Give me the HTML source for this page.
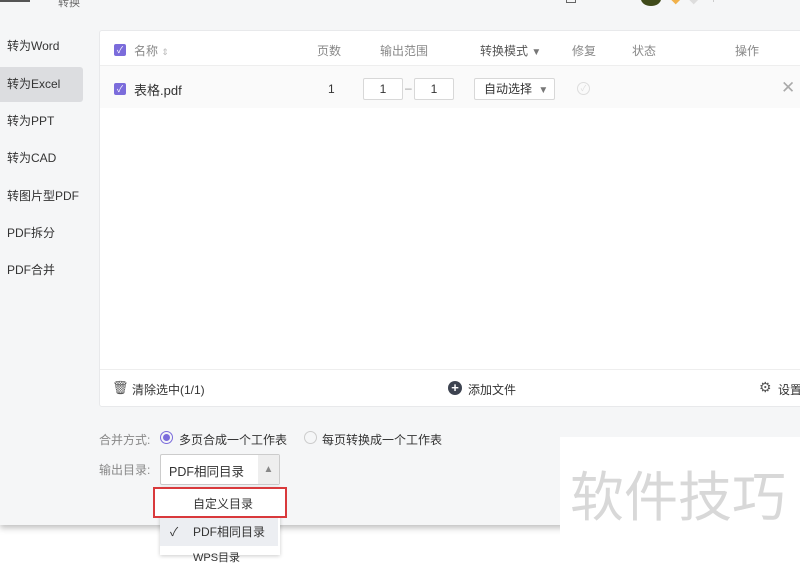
<!DOCTYPE html>
<html><head><meta charset="utf-8"><style>
*{margin:0;padding:0;box-sizing:border-box}
body{width:800px;height:555px;overflow:hidden;background:#fff;font-family:"Liberation Sans","Noto Sans CJK SC",sans-serif;font-size:12px;color:#333;position:relative}
.win{position:absolute;left:0;top:0;width:800px;height:525px;background:#f5f6f7;box-shadow:0 3px 6px rgba(0,0,0,.25)}
.a{position:absolute;white-space:nowrap}
.side{position:absolute;left:0;width:83px;height:35px;line-height:35px;padding-left:7px;font-size:12px;color:#333}
.panel{position:absolute;left:99px;top:30px;width:710px;height:377px;background:#fff;border:1px solid #e8e9eb;border-radius:3px}
.cb{position:absolute;width:12px;height:12px;background:#7b6cdb;border-radius:2px;color:#fff;font-size:9px;line-height:12px;text-align:center}
.hd{color:#888;font-size:12px}
.box{position:absolute;background:#fff;border:1px solid #d8d8d8;border-radius:2px;text-align:center;line-height:20px}
</style></head><body>
<div class="win">
<div class="a" style="left:0;top:-6px;width:30px;height:8px;border-bottom:2px solid #555"></div>
<div class="a" style="left:58px;top:-6px;color:#666;font-size:11px">转换</div>
<div class="a" style="left:566px;top:-5px;width:10px;height:8px;border:1px solid #666"></div>
<div class="a" style="left:580px;top:-6px;width:40px;height:6px;background:#888;opacity:.5"></div>
<div class="a" style="left:641px;top:-8px;width:20px;height:14px;border-radius:50%;background:#3f4a1a"></div>
<div class="a" style="left:670px;top:-6px;width:10px;height:8px;background:#f1b14a;transform:rotate(45deg)"></div>
<div class="a" style="left:688px;top:-6px;width:10px;height:8px;background:#ddd;transform:rotate(45deg)"></div>
<div class="a" style="left:713px;top:-6px;width:1px;height:8px;background:#ccc"></div>
<div class="side" style="top:29px">转为Word</div>
<div class="side" style="top:67px;background:#dcdde0;border-radius:0 3px 3px 0">转为Excel</div>
<div class="side" style="top:104px">转为PPT</div>
<div class="side" style="top:141px">转为CAD</div>
<div class="side" style="top:179px">转图片型PDF</div>
<div class="side" style="top:216px">PDF拆分</div>
<div class="side" style="top:253px">PDF合并</div>

<div class="panel">
 <div class="a" style="left:0;top:34px;width:710px;height:1px;background:#eee"></div>
 <div class="cb" style="left:14px;top:13px">✓</div>
 <div class="a hd" style="left:34px;top:11px">名称 <span style="font-size:9px;color:#bbb">⇕</span></div>
 <div class="a hd" style="left:217px;top:11px">页数</div>
 <div class="a hd" style="left:280px;top:11px">输出范围</div>
 <div class="a" style="left:380px;top:11px;color:#555">转换模式 <span style="font-size:10px;color:#777">▼</span></div>
 <div class="a hd" style="left:472px;top:11px">修复</div>
 <div class="a hd" style="left:532px;top:11px">状态</div>
 <div class="a hd" style="left:635px;top:11px">操作</div>
 <div class="a" style="left:0;top:35px;width:710px;height:42px;background:#fafafa"></div>
 <div class="cb" style="left:14px;top:52px">✓</div>
 <div class="a" style="left:34px;top:49px;font-size:13px">表格.pdf</div>
 <div class="a" style="left:228px;top:51px">1</div>
 <div class="box" style="left:263px;top:47px;width:40px;height:22px">1</div>
 <div class="a" style="left:305px;top:50px;color:#999">–</div>
 <div class="box" style="left:314px;top:47px;width:40px;height:22px">1</div>
 <div class="box" style="left:374px;top:47px;width:81px;height:22px;text-align:left;padding-left:9px">自动选择 <span style="font-size:10px;color:#777;margin-left:3px">▼</span></div>
 <div class="a" style="left:477px;top:51px;width:13px;height:13px;border:1px solid #ddd;border-radius:50%;font-size:8px;color:#ddd;text-align:center;line-height:11px">✓</div>
 <div class="a" style="left:681px;top:47px;font-size:17px;color:#aaa">✕</div>
 <div class="a" style="left:0;top:338px;width:710px;height:1px;background:#eee"></div>
 <div class="a" style="left:12px;top:349px;font-size:13px;color:#555">🗑</div>
 <div class="a" style="left:32px;top:350px">清除选中(1/1)</div>
 <div class="a" style="left:348px;top:350px;width:14px;height:14px;border-radius:50%;background:#3d4350;color:#fff;font-size:13px;font-weight:bold;text-align:center;line-height:14px">+</div>
 <div class="a" style="left:368px;top:350px">添加文件</div>
 <div class="a" style="left:659px;top:348px;font-size:14px;color:#555">⚙</div>
 <div class="a" style="left:678px;top:350px">设置</div>
</div>

<div class="a" style="left:99px;top:431px;color:#888">合并方式:</div>
<div class="a" style="left:160px;top:431px;width:13px;height:13px;border:1px solid #7b6cdb;border-radius:50%"><div style="margin:2px;width:7px;height:7px;border-radius:50%;background:#7b6cdb"></div></div>
<div class="a" style="left:179px;top:431px">多页合成一个工作表</div>
<div class="a" style="left:304px;top:431px;width:13px;height:13px;border:1px solid #ccc;border-radius:50%"></div>
<div class="a" style="left:322px;top:431px">每页转换成一个工作表</div>
<div class="a" style="left:99px;top:461px;color:#888">输出目录:</div>
<div class="a" style="left:160px;top:454px;width:120px;height:31px;background:#fff;border:1px solid #ccc;border-radius:2px"></div>
<div class="a" style="left:169px;top:461px;font-size:12.5px">PDF相同目录</div>
<div class="a" style="left:258px;top:455px;width:21px;height:29px;background:#eee;color:#888;font-size:10px;text-align:center;line-height:29px">▲</div>
</div>
<div class="a" style="left:160px;top:487px;width:120px;height:68px;background:#fff;box-shadow:0 1px 4px rgba(0,0,0,.2)"></div>
<div class="a" style="left:153px;top:487px;width:134px;height:31px;border:2px solid #d9393c;background:#fff"></div>
<div class="a" style="left:193px;top:495px">自定义目录</div>
<div class="a" style="left:160px;top:518px;width:118px;height:28px;background:#eceef2"></div>
<div class="a" style="left:170px;top:523px">✓</div>
<div class="a" style="left:193px;top:523px">PDF相同目录</div>
<div class="a" style="left:193px;top:549px;font-size:11px">WPS目录</div>
<div class="a" style="left:560px;top:437px;width:240px;height:118px;background:#fff"></div>
<div class="a" style="left:570px;top:458px;font-size:54px;color:#d8d8d8;font-family:'Noto Sans CJK SC',sans-serif;line-height:70px">软件技巧</div>
</body></html>
